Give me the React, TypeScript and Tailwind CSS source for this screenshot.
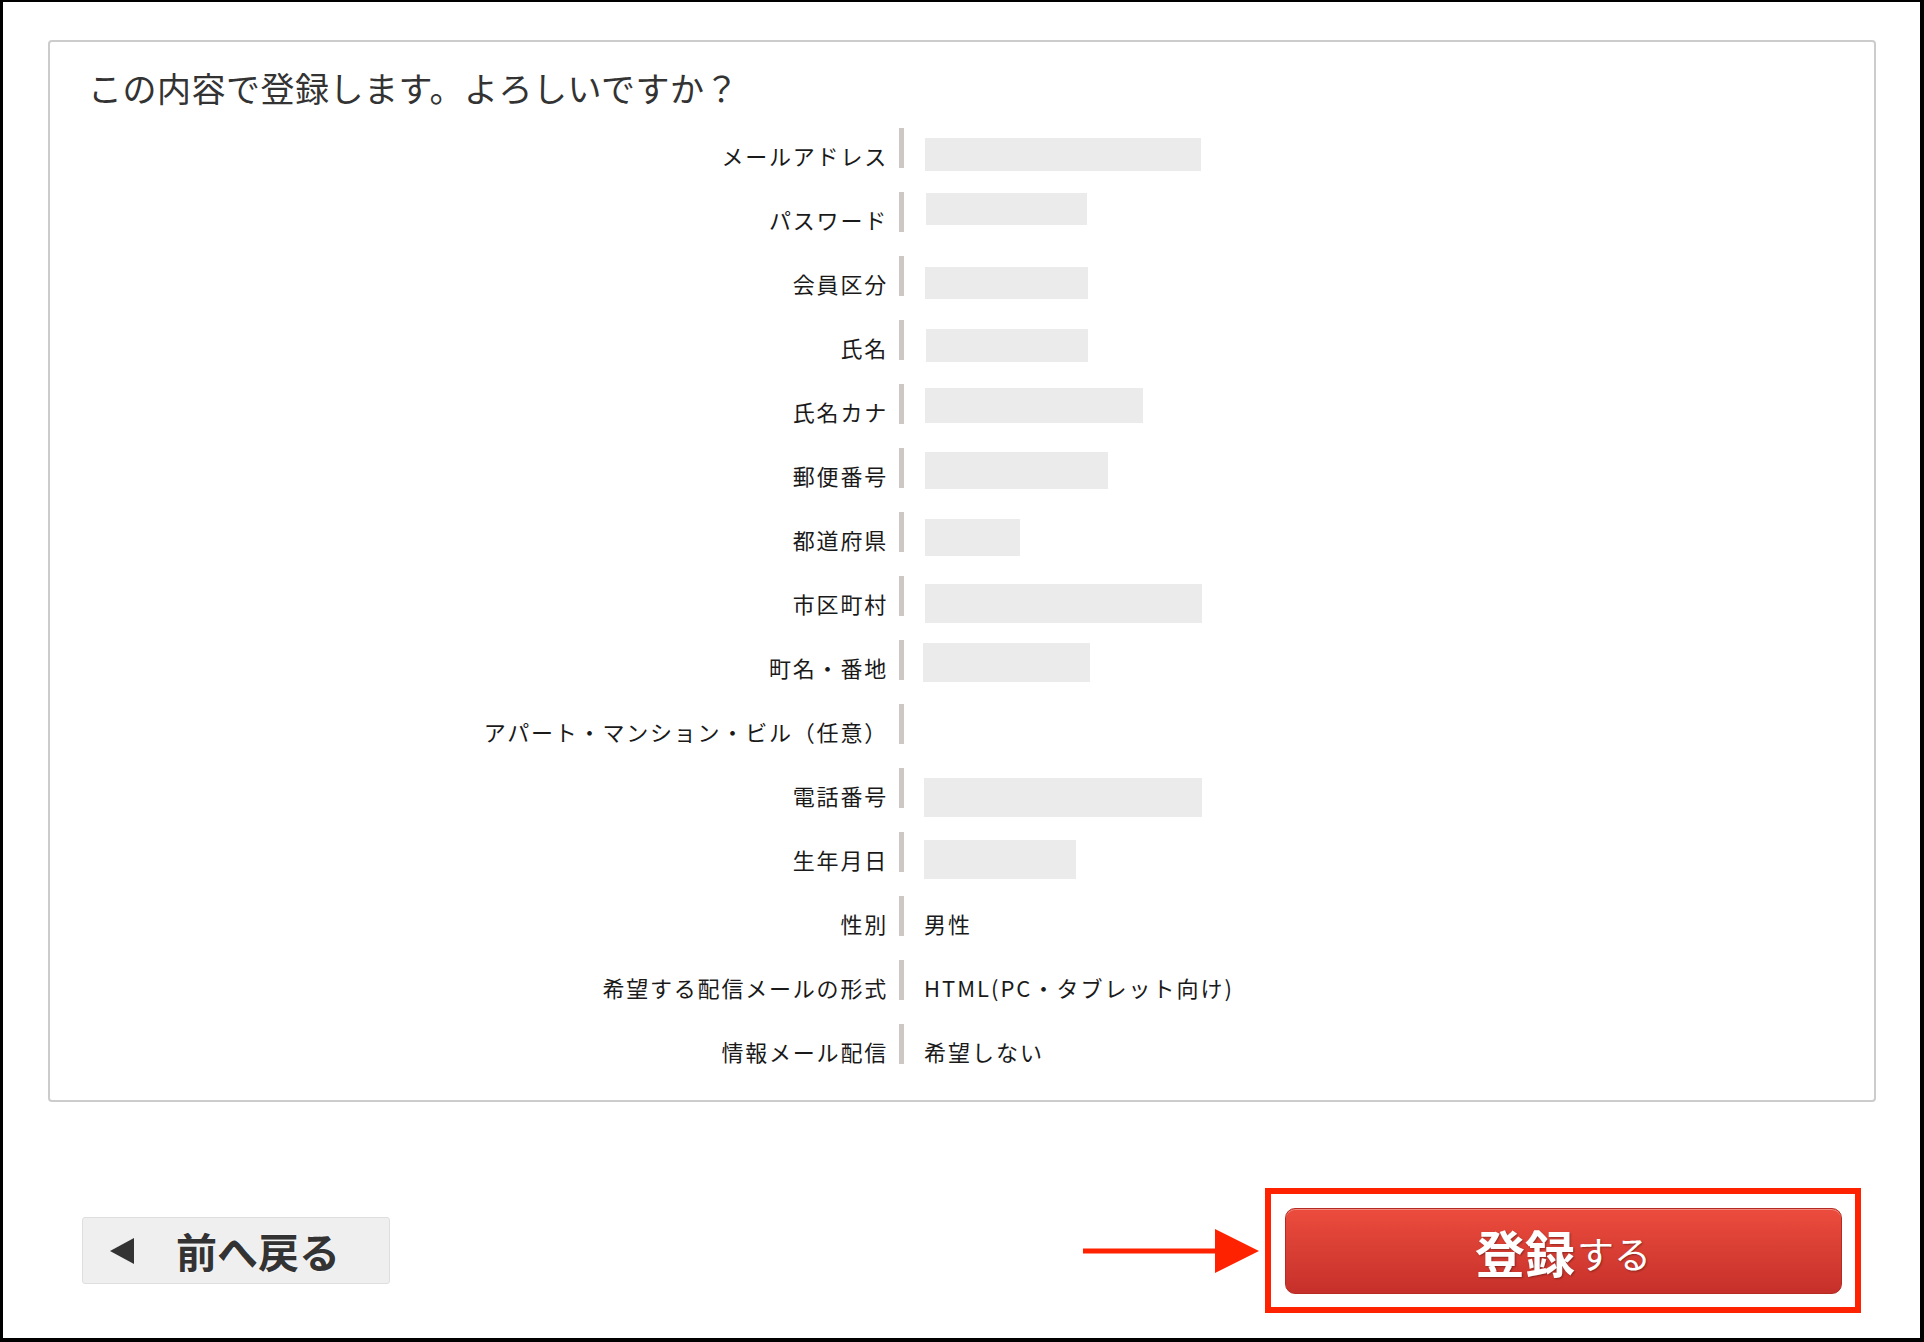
const rows: { label: string; box?: string; text?: string }[] = [
  { label: "メールアドレス", box: "ml-px mt-[10px] h-[33px] w-[276px]" },
  { label: "パスワード", box: "ml-[2px] mt-px h-[32px] w-[161px]" },
  { label: "会員区分", box: "ml-px mt-[11px] h-[32px] w-[163px]" },
  { label: "氏名", box: "ml-[2px] mt-[9px] h-[33px] w-[162px]" },
  { label: "氏名カナ", box: "ml-px mt-[4px] h-[35px] w-[218px]" },
  { label: "郵便番号", box: "ml-px mt-[4px] h-[37px] w-[183px]" },
  { label: "都道府県", box: "ml-px mt-[7px] h-[37px] w-[95px]" },
  { label: "市区町村", box: "ml-px mt-[8px] h-[39px] w-[277px]" },
  { label: "町名・番地", box: "-ml-px mt-[3px] h-[39px] w-[167px]" },
  { label: "アパート・マンション・ビル（任意）" },
  { label: "電話番号", box: "mt-[10px] h-[39px] w-[278px]" },
  { label: "生年月日", box: "mt-[8px] h-[39px] w-[152px]" },
  { label: "性別", text: "男性" },
  { label: "希望する配信メールの形式", text: "HTML(PC・タブレット向け)" },
  { label: "情報メール配信", text: "希望しない" },
];

export default function App() {
  return (
    <div className="w-[1924px] h-[1342px] bg-white border-black border-t-2 border-l-[3px] border-r-4 border-b-4 font-['Noto_Sans_CJK_JP','Noto_Sans',sans-serif] text-[#1a1a1a]">
      {/* 確認カード */}
      <div className="ml-[45px] mt-[38px] w-[1828px] h-[1062px] border-2 border-[#cccccc] rounded-[4px]">
        <h1 className="pt-[26px] pl-[38px] text-[34px] leading-[40px] tracking-[0.5px] text-[#333]">
          この内容で登録します。よろしいですか？
        </h1>

        <div className="mt-[20px] flex flex-col gap-[24px]">
          {rows.map((row) => (
            <div key={row.label} className="flex h-[40px]">
              <div className="mb-[3px] w-[838px] shrink-0 self-end text-right text-[22px] leading-[20px] tracking-[1.8px]">
                {row.label}
              </div>
              <div className="ml-[11px] w-[5px] shrink-0 bg-[#cdc8c4]" />
              <div className="ml-[20px] flex">
                {row.box && <div className={`${row.box} bg-[#ebebeb]`} />}
                {row.text && (
                  <div className="mb-[3px] self-end text-[22px] leading-[20px] tracking-[2px]">{row.text}</div>
                )}
              </div>
            </div>
          ))}
        </div>
      </div>

      {/* ボタン */}
      <div className="mt-[86px] flex items-center justify-between pl-[79px] pr-[59px]">
        <button className="flex h-[67px] w-[308px] items-center rounded-[3px] border border-[#dedede] bg-[#efefef] pl-[27px]">
          <svg width="24" height="26" viewBox="0 0 24 26">
            <polygon points="24,0 24,26 0,13" fill="#333" />
          </svg>
          <span className="ml-[42px] text-[41px] font-bold leading-none text-[#333] [text-shadow:0_0_2px_#fff]">
            前へ戻る
          </span>
        </button>

        <div className="flex items-center gap-[6px]">
          <svg width="176" height="44" viewBox="0 0 176 44">
            <rect x="0" y="19.5" width="136" height="5" fill="#ff2200" />
            <polygon points="132,0 176,22 132,44" fill="#ff2200" />
          </svg>
          <div className="flex h-[125px] w-[596px] items-center justify-center border-[6px] border-[#ff2200]">
            <div className="flex h-[86px] w-[557px] items-center justify-center rounded-[10px] border border-[#b52b22] bg-gradient-to-b from-[#ec4c3d] to-[#c6302a] shadow-[inset_0_1px_0_rgba(255,255,255,0.35)]">
              <span className="text-[50px] font-bold leading-none text-white [text-shadow:1px_1px_2px_rgba(0,0,0,0.35)]">
                登録
              </span>
              <span className="ml-[2px] mt-[6px] text-[37px] leading-none text-white [text-shadow:1px_1px_2px_rgba(0,0,0,0.35)]">
                する
              </span>
            </div>
          </div>
        </div>
      </div>
    </div>
  );
}
